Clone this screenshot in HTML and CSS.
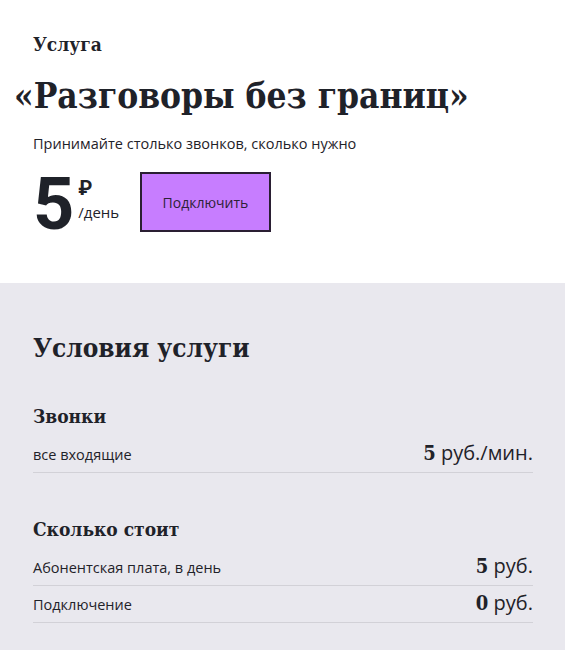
FILE: index.html
```html
<!DOCTYPE html>
<html lang="ru">
<head>
    <meta charset="UTF-8">
    <meta name="viewport" content="width=device-width, initial-scale=1.0">
    <title>Разговоры без границ</title>
    <link rel="stylesheet" href="styles.css">
</head>
<body>
    <section class="service-top">
        <div class="service-kind">Услуга</div>
        <h1 class="service-title">«Разговоры без границ»</h1>
        <p class="service-desc">Принимайте столько звонков, сколько нужно</p>
        <div class="service-buy">
            <div class="price">
                <span class="price-value">5</span>
                <span class="price-unit">
                    <span class="price-currency">₽</span>
                    <span class="price-period">/день</span>
                </span>
            </div>
            <button class="btn-connect" type="button">Подключить</button>
        </div>
    </section>
    <section class="service-terms">
        <h2>Условия услуги</h2>
        <div class="terms-group">
            <h3>Звонки</h3>
            <div class="terms-row">
                <span class="terms-name">все входящие</span>
                <span class="terms-cost"><b>5</b> руб./мин.</span>
            </div>
        </div>
        <div class="terms-group">
            <h3>Сколько стоит</h3>
            <div class="terms-row">
                <span class="terms-name">Абонентская плата, в день</span>
                <span class="terms-cost"><b>5</b> руб.</span>
            </div>
            <div class="terms-row">
                <span class="terms-name">Подключение</span>
                <span class="terms-cost"><b>0</b> руб.</span>
            </div>
        </div>
    </section>
</body>
</html>
```

FILE: styles.css
```css
body {
    margin: 0;
    font-family: "Open Sans", "Noto Sans", sans-serif;
    color: #1f2229;
    background-color: #fff;
}

/* heading font for titles and figures */
.service-kind,
.service-title,
.service-terms h2,
.terms-group h3,
.terms-cost b {
    font-family: "DejaVu Serif", serif;
    font-stretch: condensed;
    font-weight: bold;
}

.service-top {
    padding: 30px 32px 51px 33px;
}

.service-kind {
    font-size: 19px;
    line-height: 28px;
}

.service-title {
    margin: 16px 0 0 -19px;
    font-size: 35px;
    line-height: 44px;
    white-space: nowrap;
}

.service-desc {
    margin: 16px 0 0;
    font-size: 14.5px;
    line-height: 20px;
}

.service-buy {
    display: flex;
    margin-top: 18px;
}

.price {
    display: flex;
    align-items: flex-start;
    width: 107px;
    height: 60px;
}

.price-value {
    font-family: "Roboto", sans-serif;
    font-weight: bold;
    font-size: 72px;
    line-height: 65px;
}

.price-unit {
    display: flex;
    flex-direction: column;
    margin: 6px 0 0 4px;
}

.price-currency {
    font-family: "Roboto", sans-serif;
    font-weight: bold;
    font-size: 20px;
    line-height: 20px;
}

.price-period {
    margin-top: 4px;
    font-size: 15px;
    line-height: 20px;
}

.btn-connect {
    width: 131px;
    height: 60px;
    background-color: #c77dff;
    border: 2px solid #2a1f33;
    font-family: "Open Sans", sans-serif;
    font-size: 14px;
    color: #2d2236;
    cursor: pointer;
}

.service-terms {
    background-color: #e9e8ee;
    padding: 52px 32px 30px 33px;
}

.service-terms h2 {
    margin: 0;
    font-size: 26px;
    line-height: 26px;
}

.terms-group {
    margin-top: 41px;
}

.terms-group + .terms-group {
    margin-top: 42px;
}

.terms-group h3 {
    margin: 0 0 6px;
    font-size: 19px;
    line-height: 28px;
}

.terms-row {
    display: flex;
    justify-content: space-between;
    align-items: baseline;
    padding: 3px 0;
    line-height: 28px;
    border-bottom: 1px solid #d2d1d7;
}

.terms-name {
    font-size: 14.5px;
}

.terms-cost {
    font-size: 20px;
}
```
